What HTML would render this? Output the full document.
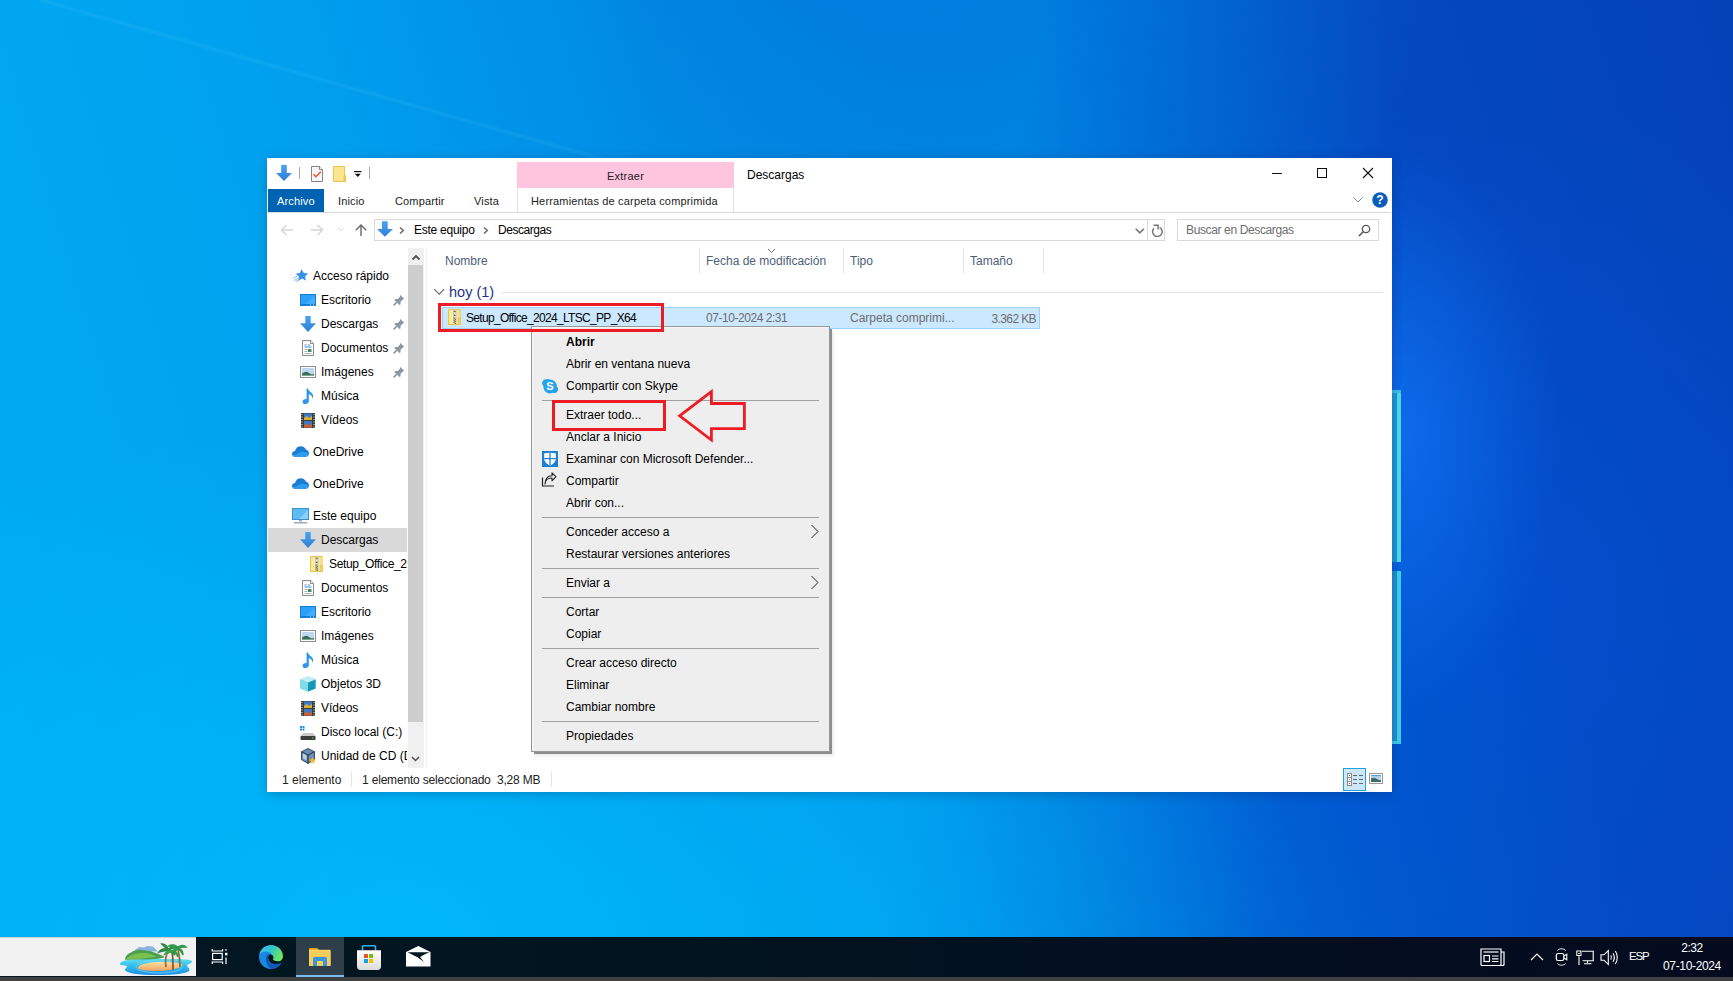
<!DOCTYPE html>
<html><head><meta charset="utf-8">
<style>
*{box-sizing:border-box}
html,body{margin:0;padding:0}
body{width:1733px;height:981px;position:relative;overflow:hidden;font-family:"Liberation Sans",sans-serif;font-size:12px;color:#000;
background:linear-gradient(73deg,#00acf3 0%,#00a8f0 13%,#00a0ee 28%,#008ee6 43%,#0070d8 57%,#0058cc 69%,#0448c0 82%,#0442b8 100%);}
.a{position:absolute;white-space:nowrap}
.t{position:absolute;white-space:nowrap;line-height:18px;height:18px}
</style></head><body>

<svg width="0" height="0" style="position:absolute">
<defs>
<linearGradient id="dlg" x1="0" y1="0" x2="0" y2="1"><stop offset="0" stop-color="#4aa3f0"/><stop offset="1" stop-color="#2f7fd6"/></linearGradient>
<symbol id="i-dl" viewBox="0 0 16 16"><path d="M5.3 0h5.4v7.3h5.3L8 16 0 7.3h5.3z" fill="url(#dlg)"/></symbol>
<symbol id="i-star" viewBox="0 0 16 13"><path d="M8.6 0.2l2.2 3.8 4.3 0.4-3.1 3 1 4.3-4-2.1-3.8 2.4 0.7-4.4L2.6 4.8l4.3-0.7z" fill="#3592e6"/><path d="M0.3 9.2L4.2 7.3M0.8 11.6L5 9.4M2.5 12.8L5.8 11" stroke="#7ab8ee" stroke-width="0.9"/></symbol>
<symbol id="i-desk" viewBox="0 0 16 12"><rect x="0" y="0" width="16" height="12" fill="#0f7fd8"/><rect x="1" y="1" width="14" height="9" fill="#2ea0f8"/><path d="M6 10L15 1v9z" fill="#44acfa"/><rect x="10" y="10.6" width="1" height="1" fill="#fff"/><rect x="13" y="10.6" width="1" height="1" fill="#fff"/></symbol>
<symbol id="i-doc" viewBox="0 0 12 16"><path d="M0.5 0.5h8.3l2.7 2.7v12.3h-11z" fill="#fff" stroke="#8a8a8a"/><path d="M8.5 0.5v3h3" fill="#eee" stroke="#8a8a8a"/><path d="M2.5 5h2M6 5h2M2.5 7h7" stroke="#3a8de0" stroke-width="1"/><path d="M2.5 9.5h3M2.5 11.5h3M2.5 13.5h7" stroke="#9aa" stroke-width="0.9"/><rect x="6" y="9" width="3.5" height="3" fill="#4a8a6a"/></symbol>
<symbol id="i-pic" viewBox="0 0 16 12"><rect x="0.5" y="0.5" width="15" height="11" fill="#fafafa" stroke="#8d8d8d"/><rect x="2" y="2" width="12" height="8" fill="#bcd8f0"/><path d="M2 7.5Q6 4.5 9 7t5 0.5V10H2z" fill="#3e6e58"/><path d="M2 9h12v1H2z" fill="#7aa890"/></symbol>
<symbol id="i-music" viewBox="0 0 12 16"><path d="M4.6 0.5h1.3c0.6 2.3 2.6 3.2 4.2 4.9 1.5 1.6 1.3 4 0.2 5.6 0.4-1.8-0.3-3.5-2.4-4.6L6.8 6v7.3c0 1.7-1.6 2.7-3.4 2.7C1.6 16 0.5 15.1 0.5 13.9c0-1.5 1.7-2.8 3.5-2.8 0.3 0 0.5 0 0.6 0.1z" fill="#2a95ea"/></symbol>
<symbol id="i-vid" viewBox="0 0 14 15"><rect x="0" y="0" width="14" height="15" fill="#3a3a3a"/><rect x="3" y="0.5" width="8" height="6.5" fill="#3d7ac7"/><rect x="3" y="8" width="8" height="6.5" fill="#3d7ac7"/><path d="M3 5l3-2 2 2 3-2v4H3z" fill="#e0b030"/><path d="M3 12.5l3-2 2 2 3-2v4H3z" fill="#d06028"/><path d="M1 1v1M1 3.5v1M1 6v1M1 8.5v1M1 11v1M1 13.5v1M13 1v1M13 3.5v1M13 6v1M13 8.5v1M13 11v1M13 13.5v1" stroke="#eee" stroke-width="1"/></symbol>
<symbol id="i-cloud" viewBox="0 0 17 11"><path d="M3.5 10.8C1.5 10.8 0 9.6 0 7.9 0 6.3 1.3 5.2 3 5.1 3.6 2.2 6 0.2 8.8 0.2c2.4 0 4.4 1.4 5.2 3.5 1.7 0.3 3 1.7 3 3.4 0 2-1.6 3.7-3.6 3.7z" fill="#1a7bd4"/><path d="M0.2 8.8C0.6 10 1.8 10.8 3.5 10.8h9.9c1.6 0 2.9-1 3.4-2.4-1.3-1.6-3.3-2.6-6-2.6-3 0-4.8 1.5-6.6 2.8-1.4 0.5-2.8 0.5-4 0.2z" fill="#2f9bec"/></symbol>
<symbol id="i-pc" viewBox="0 0 17 16"><rect x="0.5" y="0.5" width="16" height="11" fill="#5ebcf5" stroke="#3a8fd0"/><path d="M7 11L16 2v9z" fill="#8ad0fa"/><rect x="7" y="12" width="3" height="1.5" fill="#9ab"/><rect x="2" y="14" width="13" height="1.5" fill="#9aacbb"/></symbol>
<symbol id="i-zip" viewBox="0 0 13 16"><rect x="0.5" y="0.5" width="11.5" height="15" fill="#fde68f" stroke="#f0c63e"/><rect x="1.5" y="1.5" width="3.5" height="13" fill="#fcec9c"/><rect x="5.2" y="0.5" width="3.2" height="15" fill="#c8c8c8"/><rect x="5.7" y="1" width="2.2" height="7.5" fill="#f0f0f0" stroke="#aaa" stroke-width="0.4"/><circle cx="6.8" cy="2.6" r="0.75" fill="#333"/><circle cx="6.8" cy="6.3" r="0.75" fill="#333"/><path d="M5.6 9.3h1.2M6.8 10.3h1.2M5.6 11.3h1.2M6.8 12.3h1.2M5.6 13.3h1.2M6.8 14.3h1.2" stroke="#6a5a20" stroke-width="0.9"/><rect x="10.2" y="9.2" width="2.3" height="6.3" fill="#f5d46a" stroke="#e8c34a" stroke-width="0.8"/></symbol>
<symbol id="i-cube" viewBox="0 0 16 16"><path d="M8 0.5l7.5 3v9L8 15.5 0.5 12.5v-9z" fill="#2bb8d0"/><path d="M0.5 3.5L8 6.5v9L0.5 12.5z" fill="#7fdcea"/><path d="M8 6.5l7.5-3v9L8 15.5z" fill="#1797b8"/><path d="M0.5 3.5L8 0.5l7.5 3L8 6.5z" fill="#bfeff5"/></symbol>
<symbol id="i-disk" viewBox="0 0 16 14"><rect x="0" y="0" width="2" height="2" fill="#1e90ee"/><rect x="2.5" y="0" width="2" height="2" fill="#1e90ee"/><rect x="0" y="2.5" width="2" height="2" fill="#1e90ee"/><rect x="2.5" y="2.5" width="2" height="2" fill="#1e90ee"/><path d="M3 7h10l2.5 3H0.5z" fill="#c8c8c8"/><rect x="0.5" y="10" width="15" height="4" rx="0.8" fill="#3c3c3c"/><rect x="12" y="11.5" width="1.5" height="1" fill="#3f3"/></symbol>
<symbol id="i-vbox" viewBox="0 0 16 16"><path d="M8 0.5l6.5 3.2v8L8 15.5 1.5 11.7v-8z" fill="#6d8db0" stroke="#2c3e58" stroke-width="0.9"/><path d="M1.5 3.7L8 7v8.5M8 7l6.5-3.3" stroke="#1f2f48" stroke-width="1" fill="none"/><path d="M3 5.5l3.5 1.8v5L3 10.5z" fill="#c0d0e0"/><path d="M12.5 9l1.1 2.2 2.4 0.3-1.8 1.6 0.5 2.4-2.2-1.2-2.2 1.2 0.5-2.4-1.8-1.6 2.4-0.3z" fill="#f5b820"/></symbol>
<symbol id="i-pin" viewBox="0 0 12 12"><path d="M7.2 0.8l4 4-1.3 0.6-2.3 2.3-0.1 2.5-1.1 0.9-5-5 0.9-1.1 2.5-0.1 2.3-2.3z" fill="#8b97a1"/><path d="M3.6 8.4L0.6 11.4" stroke="#8b97a1" stroke-width="1.5"/></symbol>
</defs></svg>

<!-- wallpaper overlays -->
<div class="a" style="left:0;top:0;width:1733px;height:937px;background:linear-gradient(100deg,rgba(0,185,250,0) 35%,rgba(0,185,250,0.35) 55%,rgba(0,185,250,0) 75%);"></div>
<div class="a" style="left:0;top:0;width:1733px;height:937px;background:radial-gradient(ellipse 900px 520px at 420px 937px,rgba(0,195,255,0.6),rgba(0,195,255,0) 100%)"></div>
<div class="a" style="left:0;top:0;width:1733px;height:937px;background:radial-gradient(ellipse 160px 280px at 1400px 430px,rgba(20,125,255,0.6),rgba(20,125,255,0) 100%),radial-gradient(ellipse 500px 500px at 1500px 600px,rgba(0,90,230,0.35),rgba(0,90,230,0) 100%)"></div>
<svg class="a" style="left:0;top:0" width="1733" height="937"><path d="M40 0L620 164" stroke="rgba(120,210,255,0.12)" stroke-width="3" style="filter:blur(0.8px)"/></svg>
<!-- windows logo edge -->
<div class="a" style="left:1390px;top:390px;width:11px;height:172px;background:#2094d2"></div>
<div class="a" style="left:1397px;top:390px;width:4px;height:172px;background:#50d8e8"></div>
<div class="a" style="left:1390px;top:390px;width:11px;height:3px;background:#40bde0"></div>
<div class="a" style="left:1390px;top:571px;width:11px;height:173px;background:#2090d0"></div>
<div class="a" style="left:1397px;top:571px;width:4px;height:173px;background:#40d0e8"></div>
<div class="a" style="left:1390px;top:741px;width:11px;height:3px;background:#40c8e8"></div>
<!-- window -->
<div class="a" id="win" style="left:267px;top:158px;width:1125px;height:634px;background:#fff;box-shadow:0 2px 10px rgba(0,20,70,0.25)"></div>


<!-- title/quick access -->
<div class="a" style="left:517px;top:162px;width:217px;height:26px;background:#ffc4de"></div>
<div class="t" style="left:517px;top:167px;width:217px;text-align:center;color:#222;font-size:11px;letter-spacing:0.25px">Extraer</div>
<div class="t" style="left:747px;top:166px;color:#000">Descargas</div>
<!-- ribbon tabs -->
<div class="a" style="left:268px;top:189px;width:56px;height:23px;background:#0063b1"></div>
<div class="t" style="left:277px;top:192px;color:#fff;font-size:11px;letter-spacing:0.15px">Archivo</div>
<div class="t" style="left:338px;top:192px;color:#222;font-size:11px;letter-spacing:0.15px">Inicio</div>
<div class="t" style="left:395px;top:192px;color:#222;font-size:11px;letter-spacing:0.15px">Compartir</div>
<div class="t" style="left:474px;top:192px;color:#222;font-size:11px;letter-spacing:0.15px">Vista</div>
<div class="a" style="left:517px;top:188px;width:1px;height:24px;background:#e3e3e3"></div>
<div class="a" style="left:733px;top:188px;width:1px;height:24px;background:#e3e3e3"></div>
<div class="t" style="left:531px;top:192px;color:#222;font-size:11px;letter-spacing:0.17px">Herramientas de carpeta comprimida</div>
<div class="a" style="left:267px;top:212px;width:1124px;height:1px;background:#dadbdc"></div>
<!-- address bar -->
<div class="a" style="left:374px;top:219px;width:791px;height:22px;border:1px solid #d9d9d9"></div>
<div class="a" style="left:1147px;top:219px;width:1px;height:22px;background:#d9d9d9"></div>
<div class="t" style="left:414px;top:221px;color:#000;letter-spacing:-0.25px">Este equipo</div>
<div class="t" style="left:498px;top:221px;color:#000;letter-spacing:-0.45px">Descargas</div>
<div class="a" style="left:1177px;top:219px;width:202px;height:22px;border:1px solid #d9d9d9"></div>
<div class="t" style="left:1186px;top:221px;color:#6d6d6d;letter-spacing:-0.37px">Buscar en Descargas</div>
<!-- nav pane scrollbar -->
<div class="a" style="left:408px;top:248px;width:16px;height:520px;background:#f0f0f0"></div>
<div class="a" style="left:426px;top:248px;width:1px;height:520px;background:#f3f3f3"></div>
<div class="a" style="left:408px;top:265px;width:15px;height:457px;background:#cdcdcd"></div>
<!-- nav selected -->
<div class="a" style="left:268px;top:528px;width:139px;height:24px;background:#d9d9d9"></div>

<div class="a" style="left:267px;top:248px;width:140px;height:520px;overflow:hidden">
<div class="t" style="left:46px;top:19px;color:#000">Acceso rápido</div>
<div class="t" style="left:54px;top:43px;color:#000">Escritorio</div>
<div class="t" style="left:54px;top:67px;color:#000">Descargas</div>
<div class="t" style="left:54px;top:91px;color:#000">Documentos</div>
<div class="t" style="left:54px;top:115px;color:#000">Imágenes</div>
<div class="t" style="left:54px;top:139px;color:#000">Música</div>
<div class="t" style="left:54px;top:163px;color:#000">Vídeos</div>
<div class="t" style="left:46px;top:195px;color:#000">OneDrive</div>
<div class="t" style="left:46px;top:227px;color:#000">OneDrive</div>
<div class="t" style="left:46px;top:259px;color:#000">Este equipo</div>
<div class="t" style="left:54px;top:283px;color:#000">Descargas</div>
<div class="t" style="left:62px;top:307px;color:#000;letter-spacing:-0.35px">Setup_Office_2024_LTSC_PP_X64</div>
<div class="t" style="left:54px;top:331px;color:#000">Documentos</div>
<div class="t" style="left:54px;top:355px;color:#000">Escritorio</div>
<div class="t" style="left:54px;top:379px;color:#000">Imágenes</div>
<div class="t" style="left:54px;top:403px;color:#000">Música</div>
<div class="t" style="left:54px;top:427px;color:#000">Objetos 3D</div>
<div class="t" style="left:54px;top:451px;color:#000">Vídeos</div>
<div class="t" style="left:54px;top:475px;color:#000">Disco local (C:)</div>
<div class="t" style="left:54px;top:499px;color:#000">Unidad de CD (D:) VirtualBox</div>
</div>

<!-- column headers -->
<div class="t" style="left:445px;top:252px;color:#4c607a">Nombre</div>
<div class="a" style="left:699px;top:248px;width:1px;height:25px;background:#e5e5e5"></div>
<div class="t" style="left:706px;top:252px;color:#4c607a">Fecha de modificación</div>
<div class="a" style="left:843px;top:248px;width:1px;height:25px;background:#e5e5e5"></div>
<div class="t" style="left:850px;top:252px;color:#4c607a">Tipo</div>
<div class="a" style="left:963px;top:248px;width:1px;height:25px;background:#e5e5e5"></div>
<div class="t" style="left:970px;top:252px;color:#4c607a">Tamaño</div>
<div class="a" style="left:1043px;top:248px;width:1px;height:25px;background:#e5e5e5"></div>
<!-- group -->
<div class="a" style="left:449px;top:282px;line-height:20px;font-size:14.5px;color:#1e3287">hoy (1)</div>
<div class="a" style="left:502px;top:292px;width:881px;height:1px;background:#e2e2e2"></div>
<!-- selected row -->
<div class="a" style="left:442px;top:307px;width:598px;height:22px;background:#cce8ff;border:1px solid #99d1ff"></div>
<div class="t" style="left:466px;top:309px;color:#000;letter-spacing:-0.68px">Setup_Office_2024_LTSC_PP_X64</div>
<div class="t" style="left:706px;top:309px;color:#6d6d6d;letter-spacing:-0.45px">07-10-2024 2:31</div>
<div class="t" style="left:850px;top:309px;color:#6d6d6d">Carpeta comprimi...</div>
<div class="t" style="left:964px;top:310px;width:72px;text-align:right;color:#6d6d6d;letter-spacing:-0.6px">3.362 KB</div>
<!-- status bar -->
<div class="t" style="left:282px;top:771px;color:#222">1 elemento</div>
<div class="a" style="left:351px;top:771px;width:1px;height:16px;background:#e6e6e6"></div>
<div class="t" style="left:362px;top:771px;color:#222;letter-spacing:-0.18px">1 elemento seleccionado&nbsp;&nbsp;3,28 MB</div>
<div class="a" style="left:551px;top:771px;width:1px;height:16px;background:#e6e6e6"></div>

<!-- context menu -->
<div class="a" style="left:535px;top:330px;width:299px;height:426px;background:rgba(0,0,0,0.08);filter:blur(1.5px)"></div>
<div class="a" style="left:534px;top:329px;width:298px;height:425px;background:#8e8e8e;filter:blur(0.6px)"></div>
<div class="a" style="left:531px;top:326px;width:299px;height:426px;background:#eeeeee;border:1px solid #979797;box-shadow:inset 1px 1px 0 #f6f6f6"></div>
<div class="t" style="left:566px;top:333px;color:#000;font-weight:bold">Abrir</div>
<div class="t" style="left:566px;top:355px;color:#000">Abrir en ventana nueva</div>
<div class="t" style="left:566px;top:377px;color:#000">Compartir con Skype</div>
<div class="t" style="left:566px;top:406px;color:#000">Extraer todo...</div>
<div class="t" style="left:566px;top:428px;color:#000">Anclar a Inicio</div>
<div class="t" style="left:566px;top:450px;color:#000">Examinar con Microsoft Defender...</div>
<div class="t" style="left:566px;top:472px;color:#000">Compartir</div>
<div class="t" style="left:566px;top:494px;color:#000">Abrir con...</div>
<div class="t" style="left:566px;top:523px;color:#000">Conceder acceso a</div>
<div class="t" style="left:566px;top:545px;color:#000">Restaurar versiones anteriores</div>
<div class="t" style="left:566px;top:574px;color:#000">Enviar a</div>
<div class="t" style="left:566px;top:603px;color:#000">Cortar</div>
<div class="t" style="left:566px;top:625px;color:#000">Copiar</div>
<div class="t" style="left:566px;top:654px;color:#000">Crear acceso directo</div>
<div class="t" style="left:566px;top:676px;color:#000">Eliminar</div>
<div class="t" style="left:566px;top:698px;color:#000">Cambiar nombre</div>
<div class="t" style="left:566px;top:727px;color:#000">Propiedades</div>
<div class="a" style="left:542px;top:400px;width:277px;height:1px;background:#a0a0a0"></div>
<div class="a" style="left:542px;top:517px;width:277px;height:1px;background:#a0a0a0"></div>
<div class="a" style="left:542px;top:568px;width:277px;height:1px;background:#a0a0a0"></div>
<div class="a" style="left:542px;top:597px;width:277px;height:1px;background:#a0a0a0"></div>
<div class="a" style="left:542px;top:648px;width:277px;height:1px;background:#a0a0a0"></div>
<div class="a" style="left:542px;top:721px;width:277px;height:1px;background:#a0a0a0"></div>


<!-- quick access icons -->
<svg class="a" style="left:275px;top:164px" width="18" height="18" viewBox="0 0 18 18"><defs><linearGradient id="dl" x1="0" y1="0" x2="0" y2="1"><stop offset="0" stop-color="#4aa3f0"/><stop offset="1" stop-color="#2f7fd6"/></linearGradient></defs><path d="M6.2 1h5.6v8h5.2L9 17 1 9h5.2z" fill="url(#dl)"/></svg>
<div class="a" style="left:299px;top:167px;width:1px;height:12px;background:#a5a5a5"></div>
<svg class="a" style="left:311px;top:166px" width="12" height="16" viewBox="0 0 12 16"><path d="M0.5 0.5h8l3 3v12h-11z" fill="#f4f6f8" stroke="#858585"/><path d="M8.5 0.5v3h3" fill="#fff" stroke="#858585"/><path d="M2.5 8.2l2.4 2.6 5-5" fill="none" stroke="#f0521e" stroke-width="1.4"/></svg>
<svg class="a" style="left:333px;top:166px" width="13" height="16" viewBox="0 0 13 16"><path d="M0.5 0.5h11v15h-11z" fill="#fde58f" stroke="#ecc34f"/><path d="M11 9.5h1.5v6h-1.5z" fill="#f6d165" stroke="#ecc34f"/></svg>
<svg class="a" style="left:354px;top:171px" width="8" height="8" viewBox="0 0 8 8"><rect x="0" y="0" width="7.5" height="1.2" fill="#111"/><path d="M0.8 2.8h6l-3 3.2z" fill="#111"/></svg>
<div class="a" style="left:369px;top:167px;width:1px;height:12px;background:#a5a5a5"></div>
<!-- window controls -->
<div class="a" style="left:1272px;top:173px;width:10px;height:1px;background:#111"></div>
<div class="a" style="left:1317px;top:168px;width:10px;height:10px;border:1px solid #111"></div>
<svg class="a" style="left:1362px;top:167px" width="12" height="12" viewBox="0 0 12 12"><path d="M1 1L11 11M11 1L1 11" stroke="#111" stroke-width="1.1"/></svg>
<!-- ribbon chevron + help -->
<svg class="a" style="left:1353px;top:197px" width="10" height="6" viewBox="0 0 10 6"><path d="M0.5 0.5L5 5 9.5 0.5" fill="none" stroke="#8a8a8a" stroke-width="1"/></svg>
<svg class="a" style="left:1372px;top:192px" width="16" height="16" viewBox="0 0 16 16"><circle cx="8" cy="8" r="7.8" fill="#1667c4"/><circle cx="8" cy="8" r="6.9" fill="#0b5cb8"/><text x="8" y="12.3" text-anchor="middle" font-family="Liberation Sans" font-weight="bold" font-size="12" fill="#fff">?</text></svg>


<!-- nav buttons -->
<svg class="a" style="left:280px;top:224px" width="14" height="12" viewBox="0 0 14 12"><path d="M13 6H1.5M6.5 1L1.5 6l5 5" fill="none" stroke="#d5d5d5" stroke-width="1.4"/></svg>
<svg class="a" style="left:310px;top:224px" width="14" height="12" viewBox="0 0 14 12"><path d="M1 6h11.5M7.5 1l5 5-5 5" fill="none" stroke="#d5d5d5" stroke-width="1.4"/></svg>
<svg class="a" style="left:337px;top:227px" width="7" height="5" viewBox="0 0 7 5"><path d="M0.5 0.8L3.5 3.8 6.5 0.8" fill="none" stroke="#d0d0d0" stroke-width="1"/></svg>
<svg class="a" style="left:355px;top:224px" width="12" height="12" viewBox="0 0 12 12"><path d="M6 12V1M0.8 6.2L6 1l5.2 5.2" fill="none" stroke="#707070" stroke-width="1.5"/></svg>
<svg class="a" style="left:376px;top:220px" width="18" height="18" viewBox="0 0 18 18"><path d="M6 1.2h5.7v7.8h5.3L8.85 16.8 1 9h5z" fill="url(#dl)"/></svg>
<svg class="a" style="left:399px;top:227px" width="6" height="7" viewBox="0 0 6 7"><path d="M1 0.5L4.3 3.5 1 6.5" fill="none" stroke="#6a6a6a" stroke-width="1.5"/></svg>
<svg class="a" style="left:483px;top:227px" width="6" height="7" viewBox="0 0 6 7"><path d="M1 0.5L4.3 3.5 1 6.5" fill="none" stroke="#6a6a6a" stroke-width="1.5"/></svg>
<svg class="a" style="left:1135px;top:228px" width="10" height="6" viewBox="0 0 10 6"><path d="M0.7 0.7L4.8 4.8 8.9 0.7" fill="none" stroke="#777" stroke-width="1.6"/></svg>
<svg class="a" style="left:1151px;top:224px" width="12" height="13" viewBox="0 0 12 13"><path d="M3 4.2A4.8 4.8 0 1 0 8.6 3.4" fill="none" stroke="#777" stroke-width="1.5"/><path d="M2.5 1.2h4.6v4.4" fill="none" stroke="#777" stroke-width="1.5"/></svg>
<svg class="a" style="left:1358px;top:224px" width="13" height="13" viewBox="0 0 13 13"><circle cx="8" cy="5" r="3.7" fill="none" stroke="#555" stroke-width="1.3"/><path d="M5.3 7.7L1 12" stroke="#555" stroke-width="1.6"/></svg>


<!-- nav pane icons -->
<svg class="a" style="left:293px;top:269px" width="16" height="13"><use href="#i-star"/></svg>
<svg class="a" style="left:300px;top:294px" width="16" height="12"><use href="#i-desk"/></svg>
<svg class="a" style="left:300px;top:316px" width="16" height="16"><use href="#i-dl"/></svg>
<svg class="a" style="left:302px;top:340px" width="12" height="16"><use href="#i-doc"/></svg>
<svg class="a" style="left:300px;top:366px" width="16" height="12"><use href="#i-pic"/></svg>
<svg class="a" style="left:302px;top:388px" width="12" height="16"><use href="#i-music"/></svg>
<svg class="a" style="left:301px;top:413px" width="14" height="15"><use href="#i-vid"/></svg>
<svg class="a" style="left:292px;top:446px" width="17" height="11"><use href="#i-cloud"/></svg>
<svg class="a" style="left:292px;top:478px" width="17" height="11"><use href="#i-cloud"/></svg>
<svg class="a" style="left:292px;top:508px" width="17" height="16"><use href="#i-pc"/></svg>
<svg class="a" style="left:300px;top:532px" width="16" height="16"><use href="#i-dl"/></svg>
<svg class="a" style="left:310px;top:556px" width="13" height="16"><use href="#i-zip"/></svg>
<svg class="a" style="left:302px;top:580px" width="12" height="16"><use href="#i-doc"/></svg>
<svg class="a" style="left:300px;top:606px" width="16" height="12"><use href="#i-desk"/></svg>
<svg class="a" style="left:300px;top:630px" width="16" height="12"><use href="#i-pic"/></svg>
<svg class="a" style="left:302px;top:652px" width="12" height="16"><use href="#i-music"/></svg>
<svg class="a" style="left:300px;top:676px" width="16" height="16"><use href="#i-cube"/></svg>
<svg class="a" style="left:301px;top:701px" width="14" height="15"><use href="#i-vid"/></svg>
<svg class="a" style="left:300px;top:726px" width="16" height="14"><use href="#i-disk"/></svg>
<svg class="a" style="left:300px;top:748px" width="16" height="16"><use href="#i-vbox"/></svg>
<svg class="a" style="left:393px;top:294px" width="12" height="12"><use href="#i-pin"/></svg>
<svg class="a" style="left:393px;top:318px" width="12" height="12"><use href="#i-pin"/></svg>
<svg class="a" style="left:393px;top:342px" width="12" height="12"><use href="#i-pin"/></svg>
<svg class="a" style="left:393px;top:366px" width="12" height="12"><use href="#i-pin"/></svg>
<!-- scrollbar arrows -->
<svg class="a" style="left:411px;top:253px" width="10" height="8" viewBox="0 0 10 8"><path d="M1.5 6.5L5 3 8.5 6.5" fill="none" stroke="#505050" stroke-width="1.8"/></svg>
<svg class="a" style="left:411px;top:756px" width="9" height="6" viewBox="0 0 9 6"><path d="M1 1L4.5 4.5 8 1" fill="none" stroke="#505050" stroke-width="1.5"/></svg>
<!-- row zip icon -->
<svg class="a" style="left:448px;top:309px" width="13" height="16"><use href="#i-zip"/></svg>


<!-- context menu icons -->
<svg class="a" style="left:542px;top:378px" width="16" height="16" viewBox="0 0 16 16"><path d="M4.5 1.2A4 4 0 0 1 8 1.6a6.6 6.6 0 0 1 6.8 6.8 4 4 0 0 1-0.4 6.1 4 4 0 0 1-3.6 0.3A6.6 6.6 0 0 1 1.4 8.1a4 4 0 0 1 3.1-6.9z" fill="#27a2ee"/><text x="8" y="12.2" text-anchor="middle" font-family="Liberation Sans" font-weight="bold" font-size="11" fill="#fff">S</text></svg>
<svg class="a" style="left:542px;top:451px" width="16" height="16" viewBox="0 0 16 16"><rect width="16" height="16" fill="#1b7fd6"/><path d="M2.2 2.2Q8 1.2 13.8 2.2V8.8Q12.5 12.6 8 14.8 3.5 12.6 2.2 8.8z" fill="#fff"/><path d="M8 1.8V14.8M2.2 7.6H13.8" stroke="#1b7fd6" stroke-width="1.3"/></svg>
<svg class="a" style="left:541px;top:472px" width="16" height="15" viewBox="0 0 16 15"><path d="M1.5 5.5v8.5h11.5" fill="none" stroke="#222" stroke-width="1.2"/><path d="M4 12C4.3 7.8 7.2 6 11 6V8.8L15 4.6 11 0.8v3C6.8 3.8 4.2 6.8 4 12z" fill="none" stroke="#222" stroke-width="1.1" stroke-linejoin="round"/></svg>
<svg class="a" style="left:810px;top:524px" width="10" height="15" viewBox="0 0 10 15"><path d="M1.5 1L8 7.5 1.5 14" fill="none" stroke="#222" stroke-width="1"/></svg>
<svg class="a" style="left:810px;top:575px" width="10" height="15" viewBox="0 0 10 15"><path d="M1.5 1L8 7.5 1.5 14" fill="none" stroke="#222" stroke-width="1"/></svg>
<!-- red annotations -->
<div class="a" style="left:438px;top:303px;width:226px;height:29px;border:3px solid #ed1c24"></div>
<div class="a" style="left:552px;top:400px;width:114px;height:31px;border:3px solid #ed1c24"></div>
<svg class="a" style="left:0;top:0" width="1733" height="981" viewBox="0 0 1733 981"><path d="M679.6 415.8L711.4 391.6V403.5H744.4V428.6H711.4V440Z" fill="none" stroke="#ed1c24" stroke-width="2.8" stroke-linejoin="miter"/></svg>


<!-- header chevrons -->
<svg class="a" style="left:767px;top:248px" width="9" height="6" viewBox="0 0 9 6"><path d="M1 1L4.5 4.5 8 1" fill="none" stroke="#6e6e6e" stroke-width="1"/></svg>
<svg class="a" style="left:433px;top:288px" width="13" height="8" viewBox="0 0 13 8"><path d="M1.2 1.2L6.2 6.2 11.2 1.2" fill="none" stroke="#666" stroke-width="1.1"/></svg>
<!-- status bar view buttons -->
<svg class="a" style="left:1343px;top:768px" width="23" height="23" viewBox="0 0 23 23"><rect x="0.5" y="0.5" width="22" height="22" fill="#cce8f6" stroke="#26a0da"/><rect x="4.5" y="5.5" width="4" height="12" fill="#fff" stroke="#8a8a8a"/><path d="M4.5 9.5h4M4.5 13.5h4" stroke="#8a8a8a"/><rect x="6" y="7" width="1" height="1" fill="#3a7a50"/><rect x="6" y="11" width="1" height="1" fill="#5a8af0"/><rect x="6" y="15" width="1" height="1" fill="#e02020"/><path d="M10 7.5h4M16 7.5h4M10 11.5h4M16 11.5h4M10 15.5h4M16 15.5h4" stroke="#666" stroke-width="1.1"/></svg>
<svg class="a" style="left:1369px;top:773px" width="14" height="11" viewBox="0 0 14 11"><rect x="0.5" y="0.5" width="13" height="10" fill="#fff" stroke="#999"/><rect x="2" y="2" width="10" height="7" fill="#bcd4f0"/><path d="M2 5.5Q5 4 8 6t4 1V9H2z" fill="#3a6e60"/><rect x="2" y="2" width="10" height="1.2" fill="#5a9af0"/></svg>

<!-- taskbar -->
<div class="a" style="left:0;top:937px;width:1733px;height:40px;background:linear-gradient(90deg,#021822 0%,#02141f 40%,#030d1f 80%,#040b1f 100%)"></div>
<div class="a" style="left:0;top:977px;width:1733px;height:4px;background:#404040"></div>
<div class="a" style="left:0;top:937px;width:196px;height:39px;background:#f2f2f2;border-top:1px solid #cfcfcf"></div>
<!-- island emoji -->
<svg class="a" style="left:118px;top:940px" width="76" height="36" viewBox="0 0 76 36">
<defs><linearGradient id="wat" x1="0" y1="0" x2="0" y2="1"><stop offset="0" stop-color="#5fe0f0"/><stop offset="0.5" stop-color="#2fb8ec"/><stop offset="1" stop-color="#1e8fe6"/></linearGradient>
<linearGradient id="snd" x1="0" y1="0" x2="0" y2="1"><stop offset="0" stop-color="#fde1a0"/><stop offset="1" stop-color="#f0a060"/></linearGradient></defs>
<path d="M2 24c0-3 6-4 14-4.5 10-0.7 22-0.5 36-0.5 12 0 22 0.5 22 2.5 0 2-5 2.5-5 4 0 1.5 2.5 2.5 2.5 4.5 0 3-13 5-33 5C20 35 8 33 7 30c-0.5-1.5 2-2 2-3.5C9 25 2 26 2 24z" fill="url(#wat)"/>
<ellipse cx="41" cy="27" rx="23" ry="6" fill="none" stroke="#7fd4f8" stroke-width="0.7"/>
<path d="M20 27c2-3 12-5 24-5 10 0 19 1 20 3 0.5 2-10 6-24 6C28 31 19 30 20 27z" fill="url(#snd)"/>
<path d="M17 10l4-3 5 0.5 3-1.5 6 0.5 3 3 2 2H17z" fill="#8ab4de"/>
<path d="M7 19.5c0-3 3-6 6-7 3-2 7-3 11-2.5 4 0 8 1 11 2 4 1.5 8 3 12 5-4 2-14 2.5-24 2.5-8 0-16 0.5-16 0z" fill="#4aa050"/>
<path d="M8 19c4-4 10-6 17-6 6 0 11 2 14 4-8 1-20 2-31 2z" fill="#7cc050"/>
<path d="M48 27c-1-6 0-12 2-17" stroke="#a06838" stroke-width="1.8" fill="none"/>
<path d="M55 30c0-7 0-14-1-19" stroke="#8a5a30" stroke-width="1.8" fill="none"/>
<path d="M62 27c0-6-1-13-2-18" stroke="#9a6434" stroke-width="1.8" fill="none"/>
<path d="M50 10c-3-2-7-1-9 2 3-1 6-1 9-2zm0 0c0-3-3-6-6-6 2 2 4 4 6 6zm0 0c2-3 6-4 9-3-3 0-6 2-9 3zm0 0c3 0 6 2 7 5-2-2-5-4-7-5z" fill="#2e8a40" stroke="#2e8a40" stroke-width="1.6"/>
<path d="M55 11c-3-1-6 0-8 3 3-1 5-2 8-3zm0 0c1-3 4-5 7-4-3 1-5 2-7 4zm0 0c3 0 5 3 5 6-1-3-3-5-5-6z" fill="#3aa050" stroke="#3aa050" stroke-width="1.6"/>
<path d="M60 8c-2-3-6-4-9-2 3 0 6 1 9 2zm0 0c2-3 6-3 8-1-3 0-6 0-8 1zm0 0c3 1 5 4 5 7-1-3-3-5-5-7zm0 0c-3 1-4 4-4 6 1-2 2-4 4-6z" fill="#2f9a48" stroke="#2f9a48" stroke-width="1.6"/>
</svg>
<!-- task view -->
<svg class="a" style="left:211px;top:948px" width="18" height="17" viewBox="0 0 18 17"><path d="M1.2 1v2h10.4V1M1.2 16v-2h10.4v2" fill="none" stroke="#fff" stroke-width="1.2"/><rect x="1.6" y="5.4" width="9.6" height="6.2" fill="none" stroke="#fff" stroke-width="1.2"/><path d="M15 1v1.8M15 9.5V16" stroke="#fff" stroke-width="1.2"/><rect x="14" y="4.8" width="2.4" height="2.6" fill="#fff"/></svg>
<!-- edge -->
<svg class="a" style="left:259px;top:945px" width="24" height="24" viewBox="0 0 24 24">
<defs><linearGradient id="eg1" x1="0" y1="0.2" x2="1" y2="0.6"><stop offset="0" stop-color="#38c0f4"/><stop offset="0.45" stop-color="#2ec4cc"/><stop offset="1" stop-color="#74ea58"/></linearGradient></defs>
<path d="M12 0C18.6 0 24 5 24 11.2c0 2.6-1.4 4.6-4 5-2.6 0.4-5-0.4-6.3-1.6L12 9.5 0.3 9.3C1.5 3.8 6.4 0 12 0z" fill="url(#eg1)"/>
<path d="M0.3 9.3C3 5.6 10 5.2 13.2 9.4 11.2 9.2 9.6 10.4 9.4 12.4c-0.3 3.3 2.2 6.2 6 6.5 2.6 0.2 5-0.4 7.2-1.4C20.6 21.4 16.6 24 12 24 5.4 24 0 18.6 0 12c0-0.9 0.1-1.8 0.3-2.7z" fill="#1a88e0"/>
<path d="M7 13.2C7 10.4 9 9 11.2 9.4 9.8 10.4 9.3 11.6 9.4 12.8c0.2 3.6 2.6 5.8 6 6.1 2.6 0.2 5-0.4 7.2-1.4C20.6 21.4 16.6 24 13 24 9.2 23.2 7 18.4 7 13.2z" fill="#1158b0"/>
<path d="M11.6 9.6c1.4 0 2.6 1 2.8 2.3 0.2 1.3-0.4 2.6-1 3.5l-1 0.8C10.8 15.6 9.4 14.2 9.4 12.2 9.4 10.8 10.4 9.6 11.6 9.6z" fill="#021620"/>
<path d="M14.2 16.2c2.4 1.6 5.4 2 8.2 1.6" fill="none" stroke="#021620" stroke-width="1.1"/>
</svg>
<!-- explorer (active) -->
<div class="a" style="left:296px;top:937px;width:48px;height:38px;background:#2f3f4a"></div>
<div class="a" style="left:296px;top:975px;width:48px;height:2px;background:#78bcef"></div>
<svg class="a" style="left:309px;top:948px" width="22" height="18" viewBox="0 0 22 18"><path d="M0 1.2C0 0.5 0.5 0 1.2 0H8l2 1.8v2H0z" fill="#e0a418"/><path d="M0 1.8h21.5v16H0z" fill="#ffd766"/><path d="M0 3.2h21.5v14.6H0z" fill="#f8cd5c"/><path d="M4 18V10.5C4 9.6 4.7 9 5.5 9h11c0.8 0 1.5 0.6 1.5 1.5V18h-4V13H8v5z" fill="#3d95e0"/></svg>
<!-- store -->
<svg class="a" style="left:357px;top:945px" width="24" height="25" viewBox="0 0 24 25"><defs><linearGradient id="stg" x1="0" y1="0" x2="0" y2="1"><stop offset="0" stop-color="#ffffff"/><stop offset="1" stop-color="#dcdcdc"/></linearGradient></defs><path d="M5.5 5.5V2.2C5.5 1.3 6.2 0.7 7 0.7h10c0.8 0 1.5 0.6 1.5 1.5v3.3" fill="none" stroke="#2fb0f0" stroke-width="1.6"/><path d="M0 5.2h24v16.5c0 1.8-1.4 3.2-3.2 3.2H3.2C1.4 24.9 0 23.5 0 21.7z" fill="url(#stg)"/><rect x="7" y="9" width="4" height="4" fill="#f0502a"/><rect x="12" y="9" width="4" height="4" fill="#7cbb10"/><rect x="7" y="14" width="4" height="4" fill="#08a4f0"/><rect x="12" y="14" width="4" height="4" fill="#ffb800"/></svg>
<!-- mail -->
<svg class="a" style="left:406px;top:946px" width="25" height="21" viewBox="0 0 25 21"><path d="M0 6L12.3 0 24.5 6v14.5H0z" fill="#fff"/><path d="M1.5 6.2h22L18.5 8.5 14 11l4 5-6-4.5L1.5 6.2z" fill="#021620"/></svg>
<!-- tray -->
<svg class="a" style="left:1480px;top:948px" width="26" height="18" viewBox="0 0 26 18"><path d="M1 1h20v15.5c0 0.6-0.5 1-1 1H2c-0.6 0-1-0.4-1-1z" fill="none" stroke="#fff" stroke-width="1.2"/><path d="M21 4h3v12.5c0 0.6-0.5 1-1 1h-3" fill="none" stroke="#fff" stroke-width="1.2"/><path d="M3.5 4h15" stroke="#fff" stroke-width="1.2"/><rect x="4" y="7.5" width="5.5" height="6" fill="none" stroke="#fff" stroke-width="1.2"/><path d="M12 8h6.5M12 10.8h6.5M12 13.5h6.5" stroke="#fff" stroke-width="1.2"/></svg>
<svg class="a" style="left:1530px;top:952px" width="14" height="9" viewBox="0 0 14 9"><path d="M1 8L7 2l6 6" fill="none" stroke="#fff" stroke-width="1.2"/></svg>
<svg class="a" style="left:1555px;top:948px" width="13" height="18" viewBox="0 0 13 18"><path d="M2.5 2.5C3.5 1.2 5 0.8 6.5 0.8S9.5 1.2 10.5 2.5M2.5 15.5C3.5 16.8 5 17.2 6.5 17.2S9.5 16.8 10.5 15.5" fill="none" stroke="#fff" stroke-width="1"/><rect x="1.3" y="5.5" width="7.5" height="7" rx="1.8" fill="none" stroke="#fff" stroke-width="1.2"/><path d="M8.8 8L11.8 6.3V11.7L8.8 10" fill="none" stroke="#fff" stroke-width="1.1"/></svg>
<svg class="a" style="left:1576px;top:950px" width="18" height="15" viewBox="0 0 18 15"><path d="M6 1.3h11.2v9.5H6.5M11.5 10.8V13M8 13.7h7.5M3 7v8" fill="none" stroke="#fff" stroke-width="1.1"/><rect x="0.8" y="1" width="4.2" height="4.5" fill="none" stroke="#fff" stroke-width="1"/><path d="M1.8 3L3 4 4.2 2.5" fill="none" stroke="#fff" stroke-width="0.8"/><path d="M3 5.5V7" stroke="#fff" stroke-width="1"/></svg>
<svg class="a" style="left:1600px;top:949px" width="18" height="17" viewBox="0 0 18 17"><path d="M1 5.8h3L8.3 1.5v14L4 11.2H1z" fill="none" stroke="#fff" stroke-width="1.1"/><path d="M10.8 6.3c0.8 1.3 0.8 3.1 0 4.4M13 4.3c1.7 2.6 1.7 5.8 0 8.4M15.3 2c2.6 3.8 2.6 9.2 0 13" fill="none" stroke="#fff" stroke-width="1.1"/></svg>
<div class="a" style="left:1629px;top:948px;line-height:16px;font-size:11.5px;letter-spacing:-1.2px;color:#fff">ESP</div>
<div class="a" style="left:1673px;top:940px;width:38px;text-align:center;line-height:16px;font-size:12px;letter-spacing:-0.5px;color:#fff">2:32</div>
<div class="a" style="left:1660px;top:958px;width:64px;text-align:center;line-height:16px;font-size:12px;letter-spacing:-0.35px;color:#fff">07-10-2024</div>
</body></html>
